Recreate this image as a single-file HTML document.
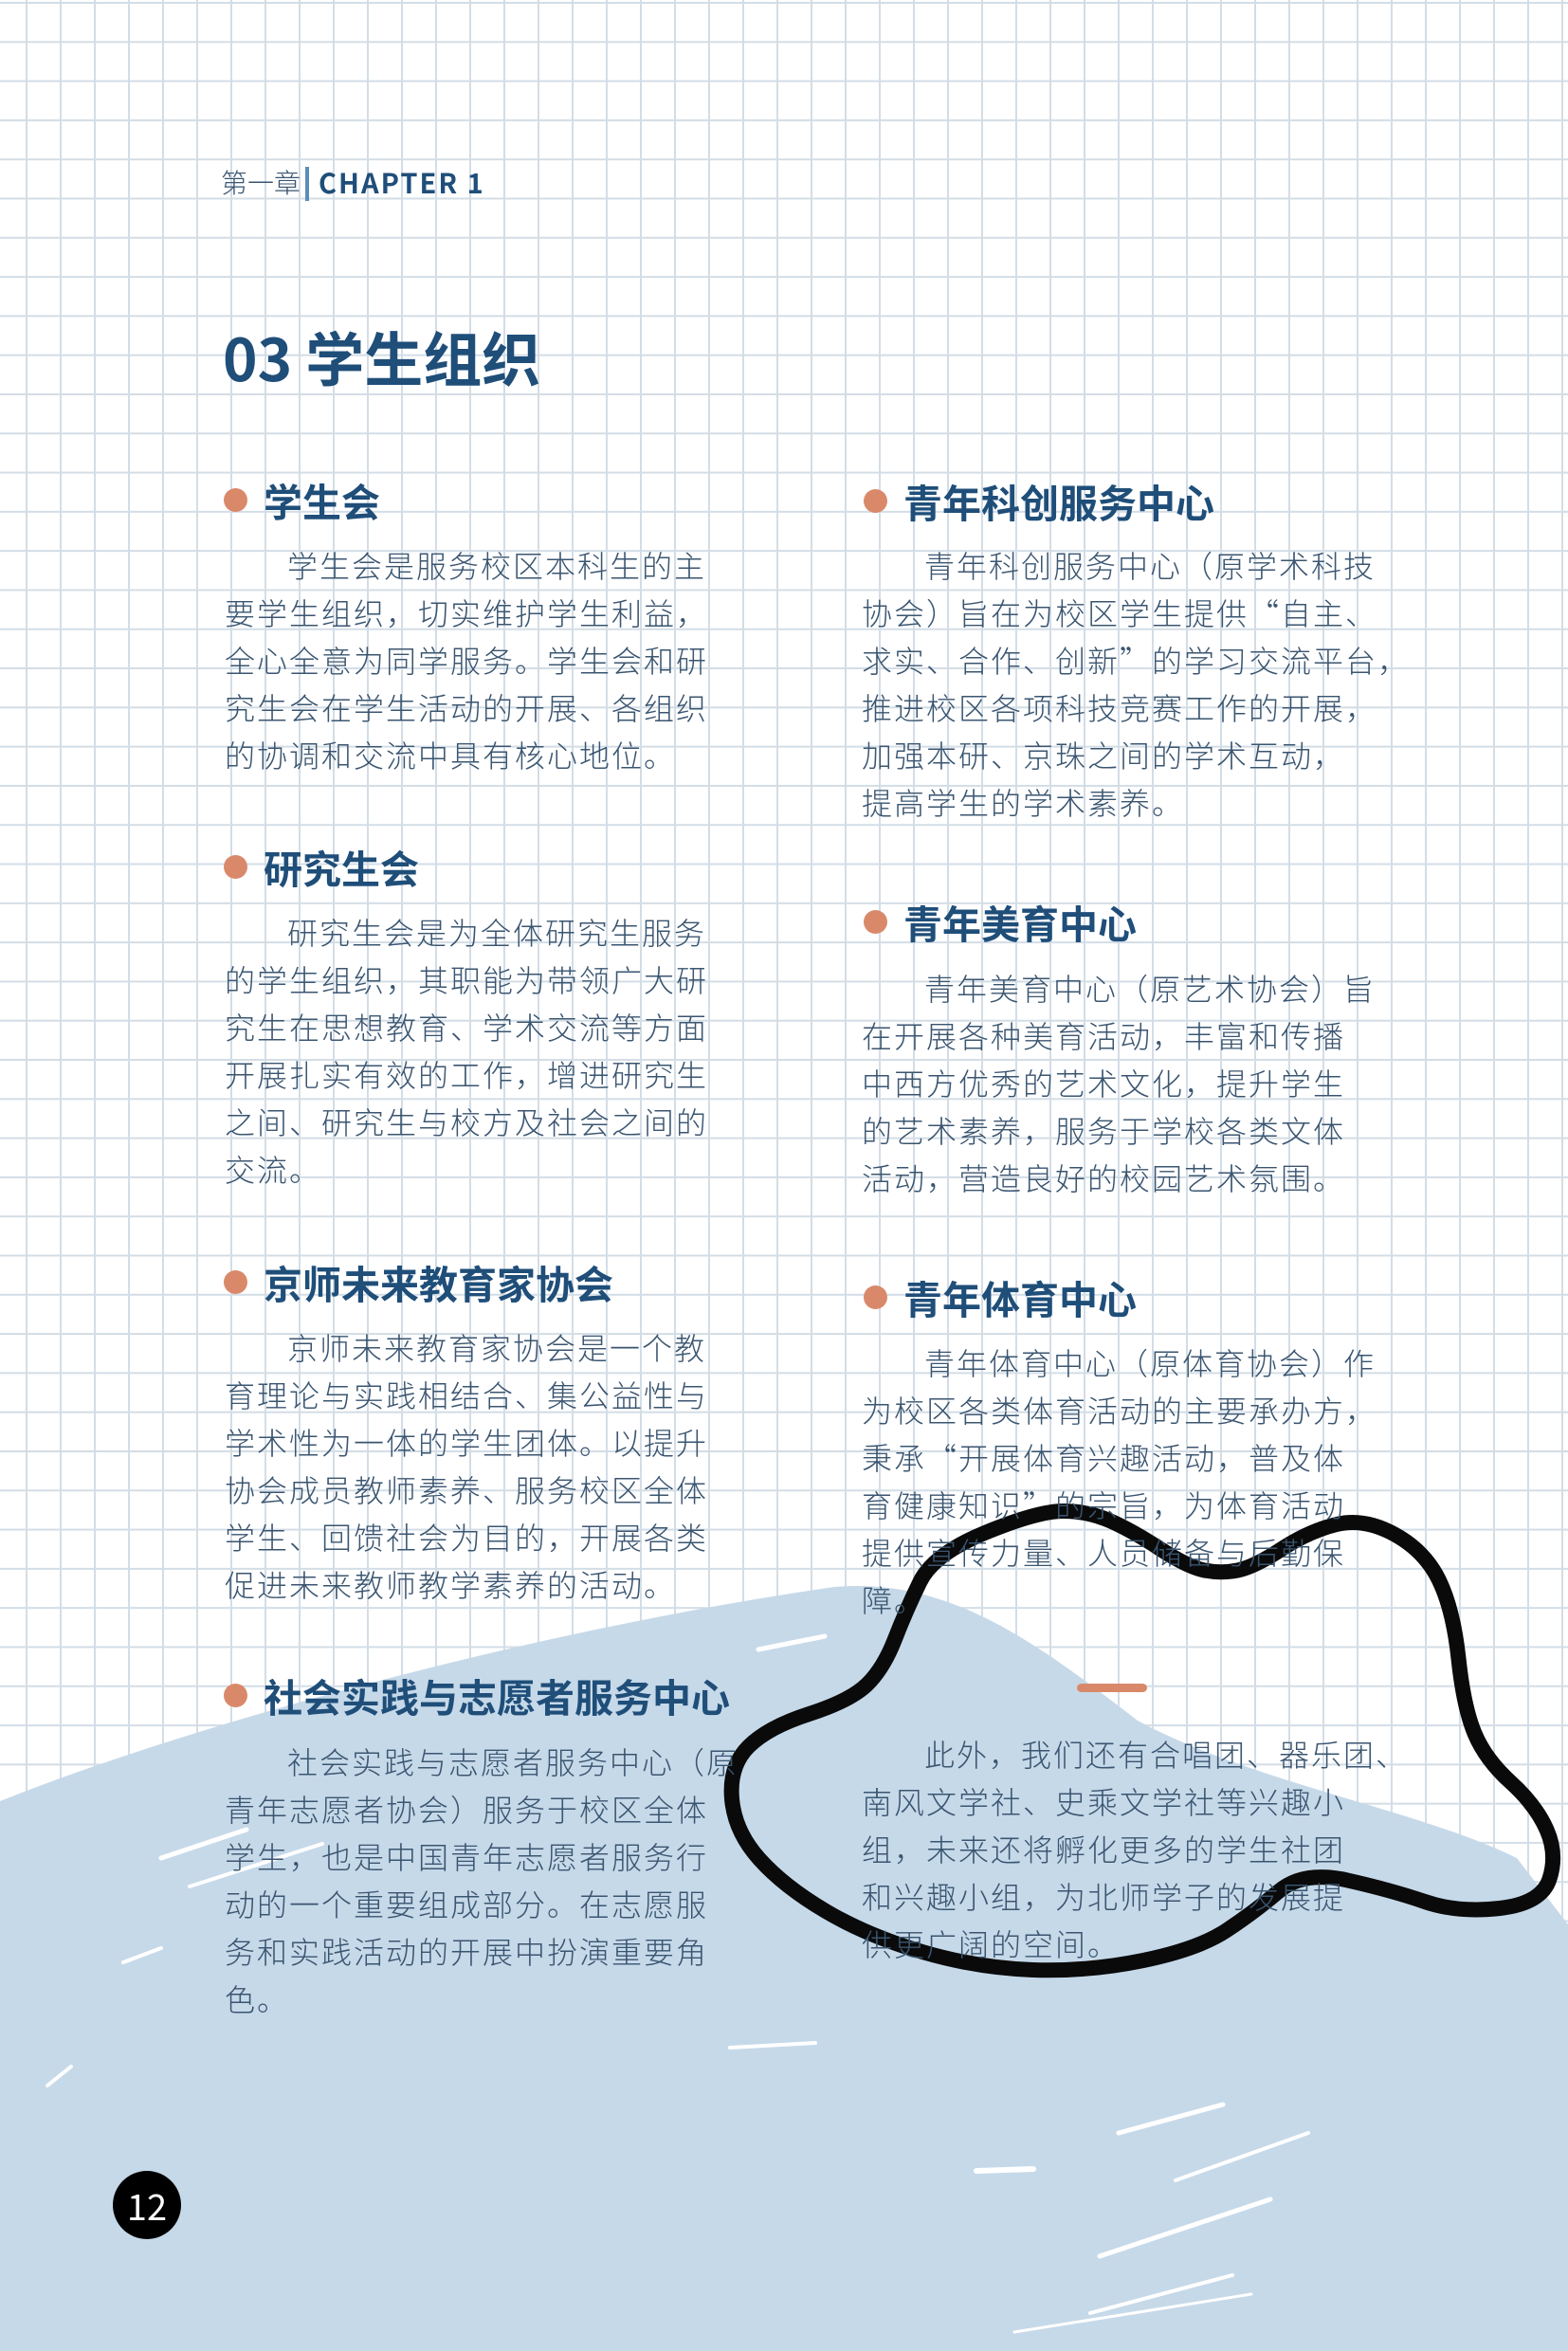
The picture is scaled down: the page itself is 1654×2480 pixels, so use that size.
<!DOCTYPE html>
<html><head><meta charset="utf-8">
<style>
html,body{margin:0;padding:0}
body{width:1654px;height:2480px;position:relative;overflow:hidden;background-color:#fff;
background-image:linear-gradient(to right,#d3dde6 2px,transparent 2px),linear-gradient(to bottom,#d3dde6 2px,transparent 2px);
background-size:36px 41.3px;background-position:27px 2px;
font-family:"Noto Sans CJK SC","Liberation Sans",sans-serif;}
svg.bg{position:absolute;left:0;top:0}
.t{position:absolute;white-space:nowrap}
.h{position:absolute;font-size:41px;font-weight:bold;color:#1f4e79;line-height:50px;white-space:nowrap}
.h:before{content:"";position:absolute;left:-42px;top:13px;width:25px;height:25px;border-radius:50%;background:#d9896a}
.p{position:absolute;font-size:32px;font-weight:300;color:#3a5570;line-height:50px;letter-spacing:2px;white-space:nowrap}
.p div{height:50px}
.ind{padding-left:66px}
</style></head><body>
<svg class="bg" width="1654" height="2480" viewBox="0 0 1654 2480">
<path d="M0 1900 C 200 1820, 560 1720, 880 1674 C 1000 1664, 1090 1730, 1200 1815 C 1320 1880, 1500 1910, 1600 1960 L 1654 2030 L1654 2480 L0 2480 Z" fill="#c6d9e9"/>
<g stroke="#fff" stroke-linecap="round" fill="none">
<path d="M170 1960 L 260 1930" stroke-width="5"/>
<path d="M200 1990 L 340 1945" stroke-width="4"/>
<path d="M130 2070 L 170 2055" stroke-width="4"/>
<path d="M800 1740 L 870 1726" stroke-width="5"/>
<path d="M1030 2290 L 1090 2288" stroke-width="6"/>
<path d="M1180 2250 L 1290 2220" stroke-width="5"/>
<path d="M1240 2300 L 1380 2250" stroke-width="4"/>
<path d="M1160 2380 L 1340 2320" stroke-width="5"/>
<path d="M1150 2440 L 1300 2400" stroke-width="4"/>
<path d="M1070 2460 L 1320 2420" stroke-width="3"/>
<path d="M50 2200 L 75 2180" stroke-width="4"/>
<path d="M770 2160 L 860 2155" stroke-width="4"/>
</g>
<rect x="1136" y="1776" width="74" height="9" rx="4.5" fill="#d9896a"/>
<path d="M 1121.5 1594 Q 1095 1594 1040 1616.5 Q 985 1639 970.5 1668.5 Q 956 1698 944 1729 Q 932 1760 914.5 1777 Q 897 1794 853.5 1808 Q 810 1822 789.5 1842.5 Q 769 1863 772 1897.5 Q 775 1932 801 1961 Q 827 1990 871 2016 Q 915 2042 973 2059 Q 1031 2076 1089.5 2078 Q 1148 2080 1206 2068 Q 1264 2056 1293.5 2036.5 Q 1323 2017 1349 1995 Q 1375 1973 1421.5 1983.5 Q 1468 1994 1503 2006 Q 1538 2018 1582 2013 Q 1626 2008 1634.5 1982 Q 1643 1956 1631.5 1930 Q 1620 1904 1593.5 1880 Q 1567 1856 1555.5 1828.5 Q 1544 1801 1538.5 1749.5 Q 1533 1698 1518 1667 Q 1503 1636 1471 1618.5 Q 1439 1601 1410 1608 Q 1381 1615 1352 1634 Q 1323 1653 1305.5 1656.5 Q 1288 1660 1270.5 1656.5 Q 1253 1653 1224 1634 Q 1195 1615 1171.5 1604.5 Q 1148 1594 1121.5 1594 Z" fill="none" stroke="#0a0a0a" stroke-width="16" stroke-linejoin="round"/>
<circle cx="155" cy="2326" r="36" fill="#000"/>
</svg>

<div class="t" style="left:233px;top:173px;font-size:28px;line-height:38px;color:#3a5570;font-weight:300">第一章</div>
<div style="position:absolute;left:322px;top:176px;width:4px;height:36px;background:#5b8db8"></div>
<div class="t" style="left:336px;top:172px;font-size:29px;line-height:40px;color:#1f4e79;font-weight:bold;letter-spacing:2px">CHAPTER 1</div>
<div class="t" style="left:235px;top:335px;font-size:62px;line-height:80px;color:#1f4e79;font-weight:bold">03 学生组织</div>

<div class="h" style="left:278px;top:502px">学生会</div>
<div class="p" style="left:237px;top:571px"><div class="ind">学生会是服务校区本科生的主</div><div>要学生组织，切实维护学生利益，</div><div>全心全意为同学服务。学生会和研</div><div>究生会在学生活动的开展、各组织</div><div>的协调和交流中具有核心地位。</div></div>

<div class="h" style="left:278px;top:889px">研究生会</div>
<div class="p" style="left:237px;top:958px"><div class="ind">研究生会是为全体研究生服务</div><div>的学生组织，其职能为带领广大研</div><div>究生在思想教育、学术交流等方面</div><div>开展扎实有效的工作，增进研究生</div><div>之间、研究生与校方及社会之间的</div><div>交流。</div></div>

<div class="h" style="left:278px;top:1327px">京师未来教育家协会</div>
<div class="p" style="left:237px;top:1396px"><div class="ind">京师未来教育家协会是一个教</div><div>育理论与实践相结合、集公益性与</div><div>学术性为一体的学生团体。以提升</div><div>协会成员教师素养、服务校区全体</div><div>学生、回馈社会为目的，开展各类</div><div>促进未来教师教学素养的活动。</div></div>

<div class="h" style="left:278px;top:1763px">社会实践与志愿者服务中心</div>
<div class="p" style="left:237px;top:1833px"><div class="ind">社会实践与志愿者服务中心（原</div><div>青年志愿者协会）服务于校区全体</div><div>学生，也是中国青年志愿者服务行</div><div>动的一个重要组成部分。在志愿服</div><div>务和实践活动的开展中扮演重要角</div><div>色。</div></div>

<div class="h" style="left:953px;top:503px">青年科创服务中心</div>
<div class="p" style="left:909px;top:571px"><div class="ind">青年科创服务中心（原学术科技</div><div>协会）旨在为校区学生提供“自主、</div><div>求实、合作、创新”的学习交流平台，</div><div>推进校区各项科技竞赛工作的开展，</div><div>加强本研、京珠之间的学术互动，</div><div>提高学生的学术素养。</div></div>

<div class="h" style="left:953px;top:947px">青年美育中心</div>
<div class="p" style="left:909px;top:1017px"><div class="ind">青年美育中心（原艺术协会）旨</div><div>在开展各种美育活动，丰富和传播</div><div>中西方优秀的艺术文化，提升学生</div><div>的艺术素养，服务于学校各类文体</div><div>活动，营造良好的校园艺术氛围。</div></div>

<div class="h" style="left:953px;top:1343px">青年体育中心</div>
<div class="p" style="left:909px;top:1412px"><div class="ind">青年体育中心（原体育协会）作</div><div>为校区各类体育活动的主要承办方，</div><div>秉承“开展体育兴趣活动，普及体</div><div>育健康知识”的宗旨，为体育活动</div><div>提供宣传力量、人员储备与后勤保</div><div>障。</div></div>

<div class="p" style="left:909px;top:1825px"><div class="ind">此外，我们还有合唱团、器乐团、</div><div>南风文学社、史乘文学社等兴趣小</div><div>组，未来还将孵化更多的学生社团</div><div>和兴趣小组，为北师学子的发展提</div><div>供更广阔的空间。</div></div>

<div class="t" style="left:119px;top:2302px;width:72px;text-align:center;font-size:38px;line-height:48px;color:#fff">12</div>
</body></html>
